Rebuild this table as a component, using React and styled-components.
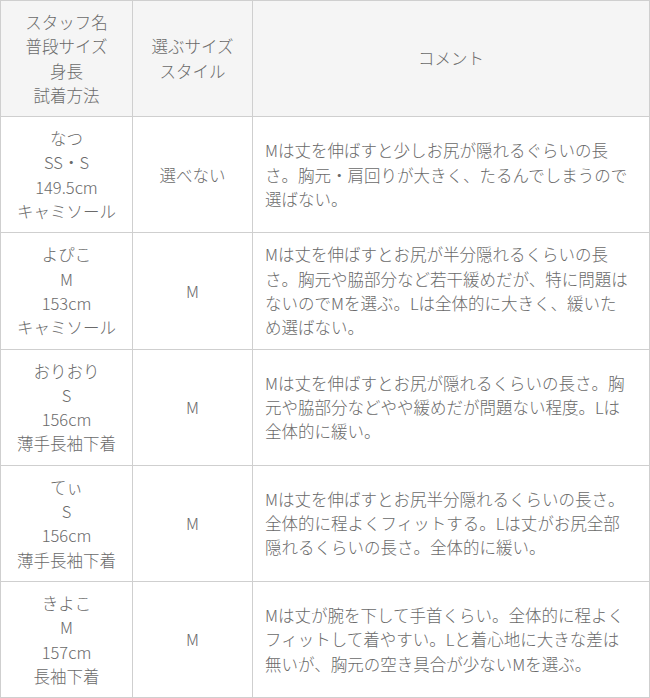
import React from "react";
import styled, { createGlobalStyle } from "styled-components";

const GlobalStyle = createGlobalStyle`
    body {
        margin: 0;
        background: #fff;
        font-family: "Noto Sans CJK JP", "Noto Sans", sans-serif;
    }
`;

const rows = [
    {
        id: 1,
        staff: ["なつ", "SS・S", "149.5cm", "キャミソール"],
        size: "選べない",
        comment: [
            "Mは丈を伸ばすと少しお尻が隠れるぐらいの長",
            "さ。胸元・肩回りが大きく、たるんでしまうので",
            "選ばない。"
        ]
    },
    {
        id: 2,
        staff: ["よぴこ", "M", "153cm", "キャミソール"],
        size: "M",
        comment: [
            "Mは丈を伸ばすとお尻が半分隠れるくらいの長",
            "さ。胸元や脇部分など若干緩めだが、特に問題は",
            "ないのでMを選ぶ。Lは全体的に大きく、緩いた",
            "め選ばない。"
        ]
    },
    {
        id: 3,
        staff: ["おりおり", "S", "156cm", "薄手長袖下着"],
        size: "M",
        comment: [
            "Mは丈を伸ばすとお尻が隠れるくらいの長さ。胸",
            "元や脇部分などやや緩めだが問題ない程度。Lは",
            "全体的に緩い。"
        ]
    },
    {
        id: 4,
        staff: ["てぃ", "S", "156cm", "薄手長袖下着"],
        size: "M",
        comment: [
            "Mは丈を伸ばすとお尻半分隠れるくらいの長さ。",
            "全体的に程よくフィットする。Lは丈がお尻全部",
            "隠れるくらいの長さ。全体的に緩い。"
        ]
    },
    {
        id: 5,
        staff: ["きよこ", "M", "157cm", "長袖下着"],
        size: "M",
        comment: [
            "Mは丈が腕を下して手首くらい。全体的に程よく",
            "フィットして着やすい。Lと着心地に大きな差は",
            "無いが、胸元の空き具合が少ないMを選ぶ。"
        ]
    }
];

const Lines = ({ items }) =>
    items.map((line, i) => (
        <React.Fragment key={i}>
            {i > 0 && <br />}
            {line}
        </React.Fragment>
    ));

export default function App() {
    return (
        <>
            <GlobalStyle />
            <SizeTable>
                <colgroup>
                    <col style={{ width: 132 }} />
                    <col style={{ width: 120 }} />
                    <col />
                </colgroup>
                <thead>
                    <tr>
                        <HeadCell>
                            <Lines items={["スタッフ名", "普段サイズ", "身長", "試着方法"]} />
                        </HeadCell>
                        <HeadCell>
                            <Lines items={["選ぶサイズ", "スタイル"]} />
                        </HeadCell>
                        <HeadCell>コメント</HeadCell>
                    </tr>
                </thead>
                <tbody>
                    {rows.map(row => (
                        <tr key={row.id}>
                            <Cell>
                                <Lines items={row.staff} />
                            </Cell>
                            <Cell>{row.size}</Cell>
                            <Cell $left>
                                <Lines items={row.comment} />
                            </Cell>
                        </tr>
                    ))}
                </tbody>
            </SizeTable>
        </>
    );
}

const SizeTable = styled.table`
    width: 650px;
    table-layout: fixed;
    border-collapse: collapse;
    color: #6a6a6a;
    font-size: 16.5px;
    font-weight: 300;
    line-height: 24.3px;
    tr {
        height: 116px;
    }
`;

const HeadCell = styled.th`
    font-weight: 300;
    background: #f5f5f5;
    border: 1px solid #cfcfcf;
    text-align: center;
    vertical-align: middle;
    padding: 9px 4px;
    white-space: nowrap;
`;

const Cell = styled.td`
    border: 1px solid #cfcfcf;
    text-align: ${p => (p.$left ? "left" : "center")};
    vertical-align: middle;
    padding: ${p => (p.$left ? "9px 6px 9px 12px" : "9px 4px")};
    white-space: nowrap;
`;
